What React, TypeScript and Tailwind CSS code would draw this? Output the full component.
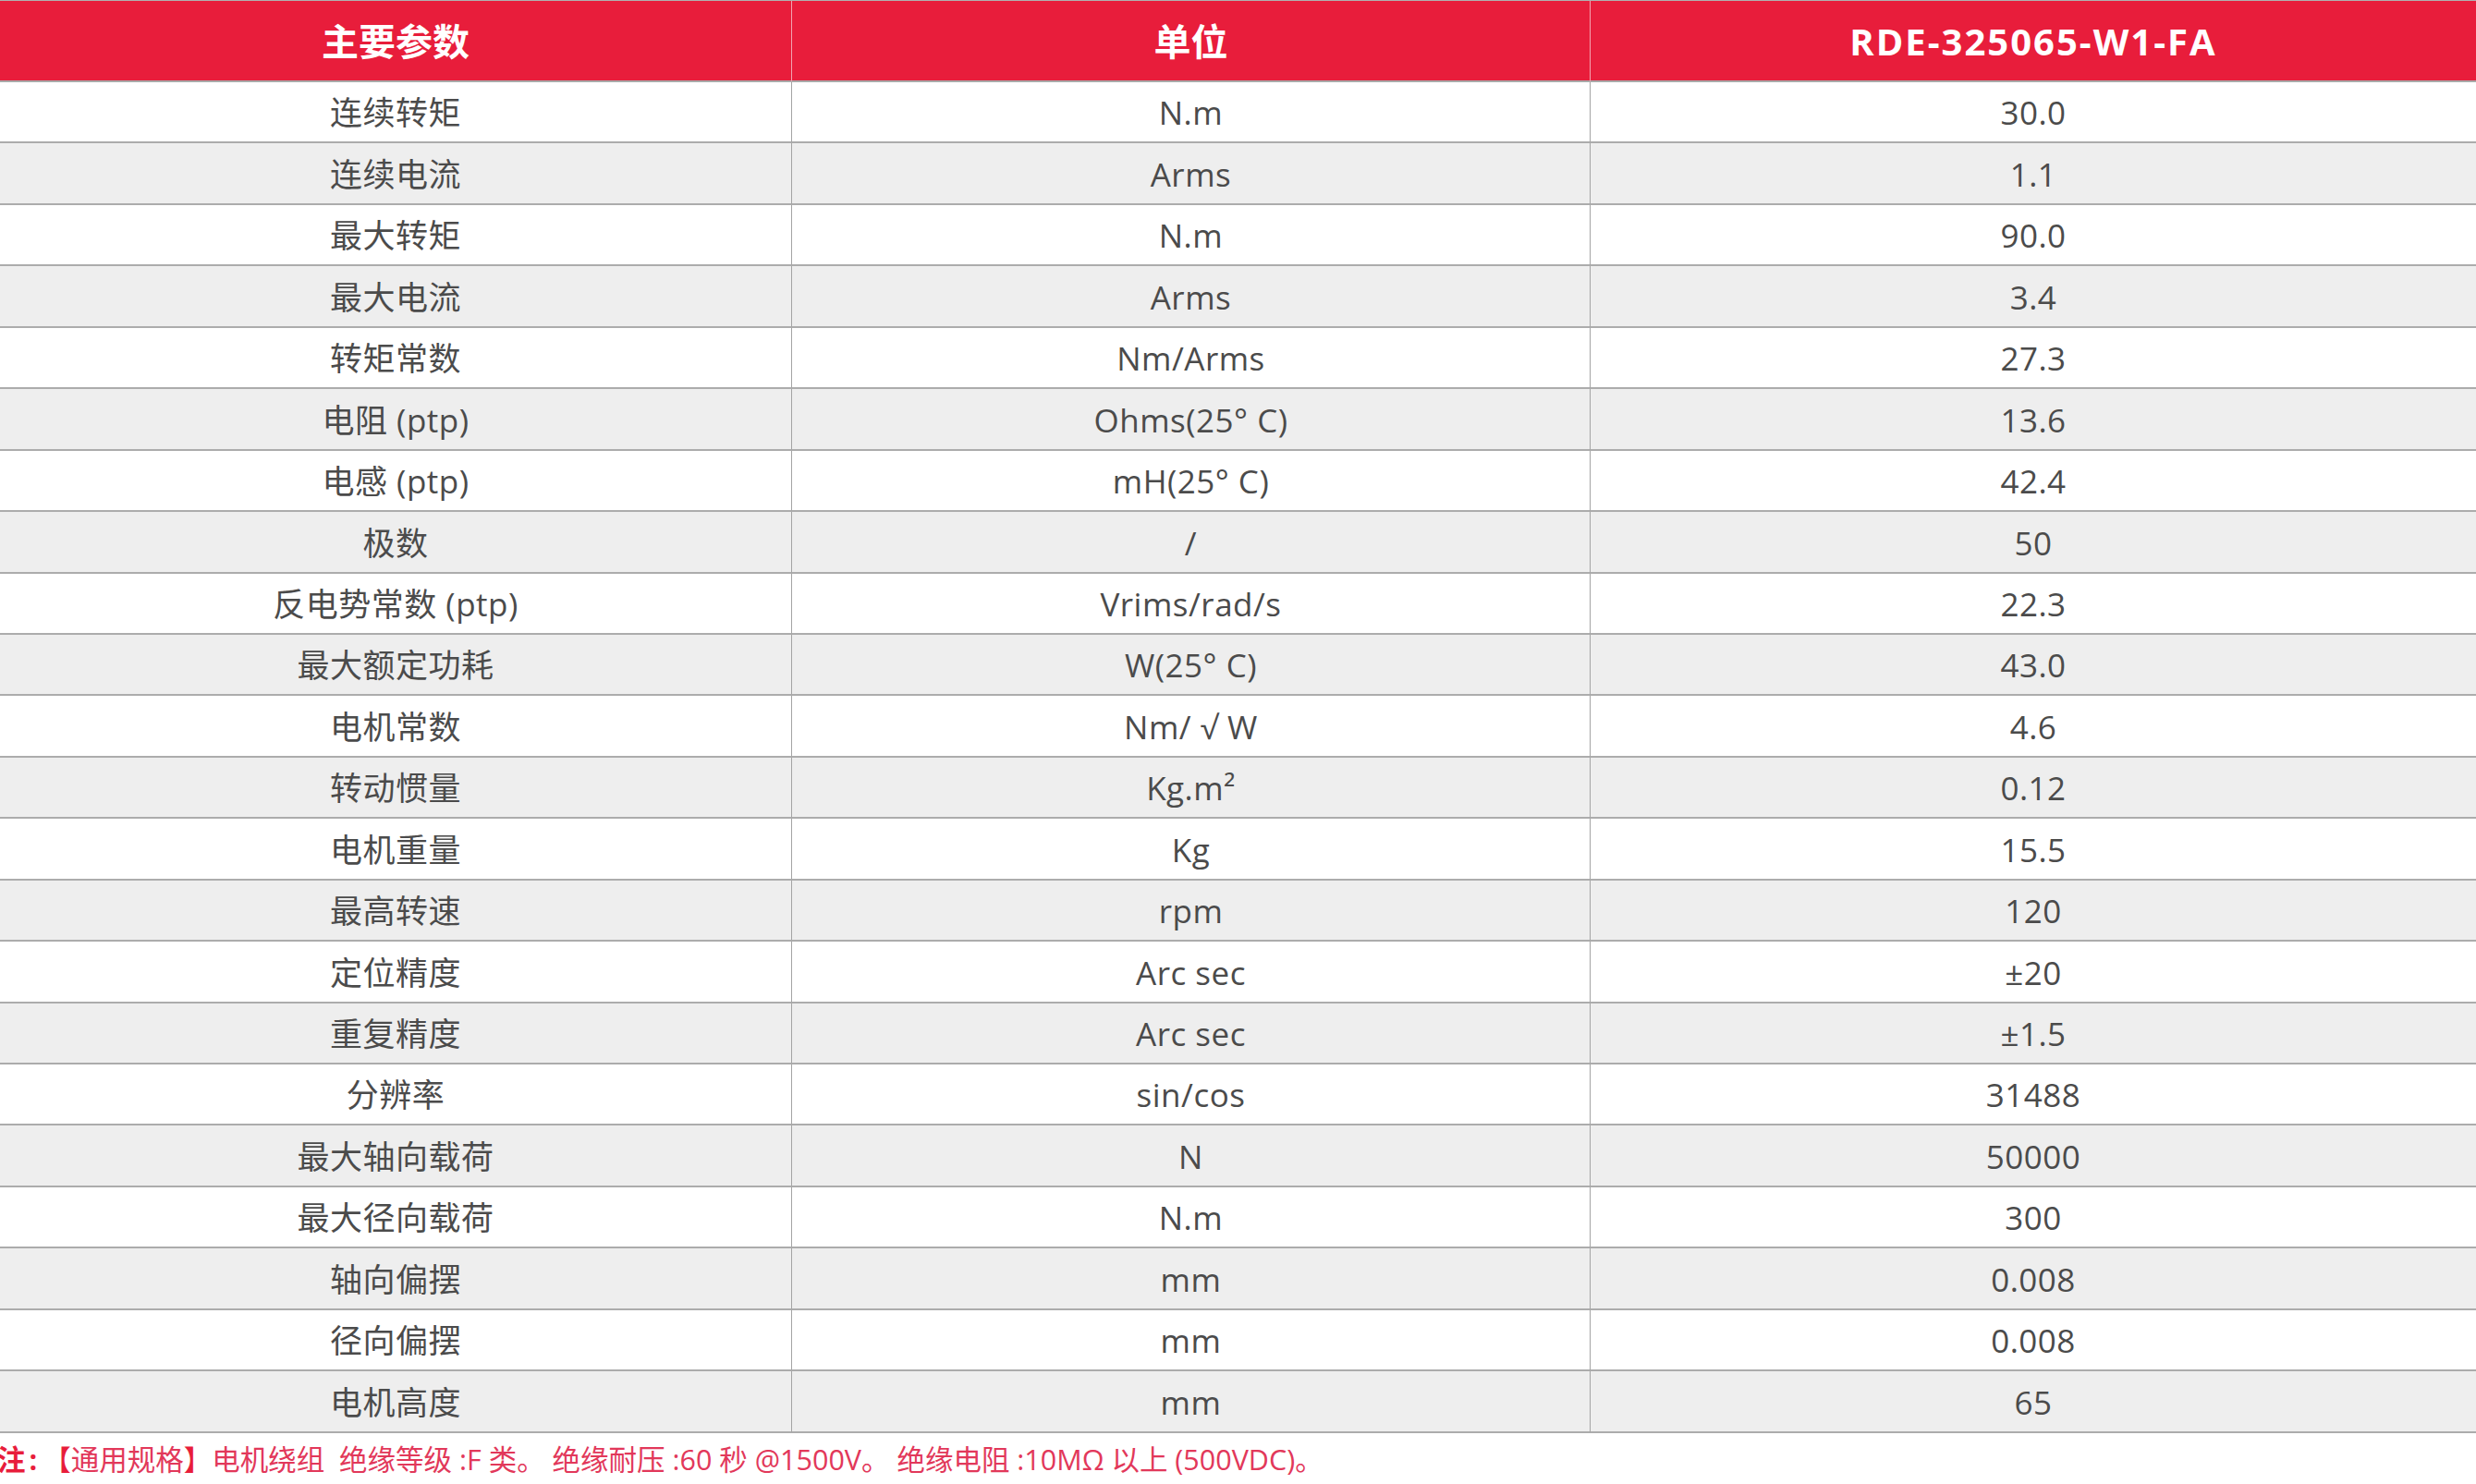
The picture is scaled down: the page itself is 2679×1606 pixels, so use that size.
import React from "react";

const rows: [string, React.ReactNode, string][] = [
  ["连续转矩", "N.m", "30.0"],
  ["连续电流", "Arms", "1.1"],
  ["最大转矩", "N.m", "90.0"],
  ["最大电流", "Arms", "3.4"],
  ["转矩常数", "Nm/Arms", "27.3"],
  ["电阻 (ptp)", "Ohms(25° C)", "13.6"],
  ["电感 (ptp)", "mH(25° C)", "42.4"],
  ["极数", "/", "50"],
  ["反电势常数 (ptp)", "Vrims/rad/s", "22.3"],
  ["最大额定功耗", "W(25° C)", "43.0"],
  ["电机常数", "Nm/ √ W", "4.6"],
  ["转动惯量", "Kg.m²", "0.12"],
  ["电机重量", "Kg", "15.5"],
  ["最高转速", "rpm", "120"],
  ["定位精度", "Arc sec", "±20"],
  ["重复精度", "Arc sec", "±1.5"],
  ["分辨率", "sin/cos", "31488"],
  ["最大轴向载荷", "N", "50000"],
  ["最大径向载荷", "N.m", "300"],
  ["轴向偏摆", "mm", "0.008"],
  ["径向偏摆", "mm", "0.008"],
  ["电机高度", "mm", "65"],
];

export default function App() {
  return (
    <div
      className="w-[2679px] h-[1606px] bg-white overflow-hidden"
      style={{ fontFamily: '"Open Sans", "Noto Sans CJK SC", sans-serif' }}
    >
      <div className="grid grid-cols-[857px_864px_1fr] border-t border-[#b0b0b0]">
        {["主要参数", "单位", "RDE-325065-W1-FA"].map((h, i) => (
          <div
            key={h}
            className={`h-[88px] bg-[#e81d3b] border-b-2 border-[#a9a9a9] flex items-center justify-center pt-[2px] text-white font-bold text-[40px] ${
              i < 2 ? "border-r border-r-[#f2a3b0]" : "tracking-[2px]"
            }`}
          >
            {h}
          </div>
        ))}
        {rows.map((r, ri) =>
          r.map((c, ci) => (
            <div
              key={`${ri}-${ci}`}
              className={`h-[66.45px] border-b-2 border-[#acacac] flex items-center justify-center pt-[3px] text-[35px] tracking-[0.5px] text-[#4b4b4b] ${
                ri % 2 === 1 ? "bg-[#eeeeee]" : "bg-white"
              } ${ci < 2 ? "border-r border-r-[#a4a4a4]" : ""}`}
            >
              {c}
            </div>
          ))
        )}
      </div>
      <div className="h-[56px] flex items-center pt-[3px] text-[30.5px] text-[#e2385a] whitespace-pre">
        <span className="font-bold text-[#e81d3b] -ml-[3px]">注</span>
        <span className="font-bold text-[#e81d3b] ml-[4px]">:</span>
        <span className="text-[#e81d3b] ml-[6px]">【</span>
        <span>通用规格</span>
        <span className="text-[#e81d3b]">】</span>
        <span>电机绕组  绝缘等级 :F 类。 绝缘耐压 :60 秒 @1500V。 绝缘电阻 :10MΩ 以上 (500VDC)。</span>
      </div>
    </div>
  );
}
